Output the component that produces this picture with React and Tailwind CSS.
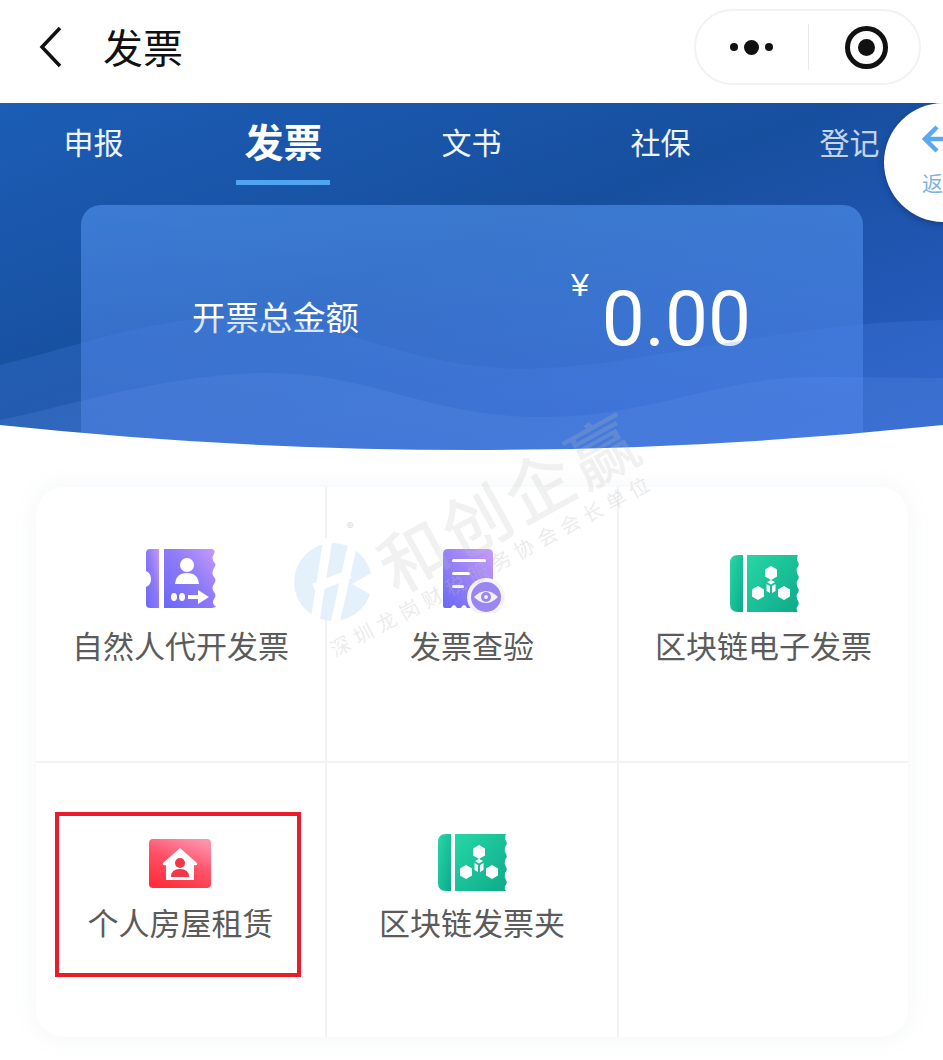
function IconPerson() {
  return (
    <svg width="72" height="66" viewBox="0 0 72 66">
      <defs>
        <linearGradient id="pa" x1="0" y1="1" x2="1" y2="0">
          <stop offset="0" stopColor="#6a68f6" />
          <stop offset="0.55" stopColor="#8f7bf8" />
          <stop offset="1" stopColor="#c79bfb" />
        </linearGradient>
      </defs>
      <path d="M5 2H14V61H5Q1 61 1 57V40Q6 38 6 32Q6 26 1 24V6Q1 2 5 2Z" fill="url(#pa)" />
      <path d="M19 2H67Q71 3 69 7Q66 11 69 15Q72 17 69 21Q66 26 69 30Q72 33 69 37Q66 41 69 45Q72 48 69 52Q66 56 71 60L67 61H19Z" fill="url(#pa)" />
      <circle cx="42" cy="18" r="7" fill="#fff" />
      <path d="M30 37Q31 26 42 26Q53 26 54 37Z" fill="#fff" />
      <ellipse cx="29" cy="50" rx="3" ry="4" fill="#fff" />
      <ellipse cx="37" cy="50" rx="3" ry="4" fill="#fff" />
      <path d="M43 48H53V43L64 50L53 57V52H43Z" fill="#fff" />
    </svg>
  );
}

function IconCheck() {
  return (
    <svg width="72" height="66" viewBox="0 0 72 66">
      <defs>
        <linearGradient id="ca" x1="0" y1="1" x2="1" y2="0">
          <stop offset="0" stopColor="#6a68f6" />
          <stop offset="1" stopColor="#c69bf9" />
        </linearGradient>
      </defs>
      <path d="M12 2H52Q57 2 57 7V50H45V61H41Q38 55 35 61H31Q28 55 25 61H21Q18 55 15 61H9Q7 61 7 59V7Q7 2 12 2Z" fill="url(#ca)" />
      <rect x="16" y="12" width="34" height="3" rx="1.5" fill="#fff" />
      <rect x="16" y="25" width="18" height="3" rx="1.5" fill="#fff" />
      <rect x="16" y="38" width="12" height="3" rx="1.5" fill="#fff" />
      <circle cx="50" cy="50" r="19" fill="#f6f2fc" />
      <circle cx="50" cy="50" r="15" fill="#9a86ef" />
      <path d="M38 50Q50 38 62 50Q50 62 38 50Z" fill="#f4f0fc" />
      <circle cx="50" cy="50" r="5" fill="#9a86ef" />
      <circle cx="50" cy="50" r="2" fill="#f4f0fc" />
    </svg>
  );
}

function IconChain({ id, dy, dx }) {
  return (
    <svg width="72" height="66" viewBox="0 0 72 66">
      <defs>
        <linearGradient id={id} x1="0" y1="0" x2="1" y2="1">
          <stop offset="0" stopColor="#27d7a6" />
          <stop offset="1" stopColor="#0eaa8a" />
        </linearGradient>
      </defs>
      <g transform={`translate(${dx} ${dy})`}>
        <path d="M8 0H13V57H8Q0 57 0 49V8Q0 0 8 0Z" fill={`url(#${id})`} />
        <path d="M17 0H68Q66 4 68 7Q70 10 67 13Q66 17 68 20Q70 23 67 26Q66 30 68 33Q70 36 67 39Q66 43 68 46Q70 49 67 52Q66 55 68 57H17Z" fill={`url(#${id})`} />
        <path d="M41 11L47 14.5V21.5L41 25L35 21.5V14.5Z" fill="#fff" />
        <path d="M28 31L34 34.5V41.5L28 45L22 41.5V34.5Z" fill="#fff" />
        <path d="M54 31L60 34.5V41.5L54 45L48 41.5V34.5Z" fill="#fff" />
        <path d="M37 27L41 25L45 27L41 29.5Z" fill="#fff" />
        <path d="M40 31V38L36.5 36V29Z" fill="#fff" />
        <path d="M42 31V38L45.5 36V29Z" fill="#fff" />
      </g>
    </svg>
  );
}

function IconHouse() {
  return (
    <svg width="72" height="66" viewBox="0 0 72 66">
      <defs>
        <linearGradient id="ha" x1="0.3" y1="1" x2="0.8" y2="0">
          <stop offset="0" stopColor="#ff2f3b" />
          <stop offset="0.5" stopColor="#ff5168" />
          <stop offset="1" stopColor="#ff93ad" />
        </linearGradient>
      </defs>
      <rect x="4" y="9" width="62" height="49" rx="4" fill="url(#ha)" />
      <path d="M35 18L52 33Q53 36 49 35V50H21V35Q17 36 18 33Z" fill="#fff" />
      <circle cx="35" cy="33" r="5" fill="#f0384a" />
      <path d="M26 47Q26 39 35 39Q44 39 44 47Z" fill="#f0384a" />
    </svg>
  );
}

function Cell({ children, label, row, border }) {
  return (
    <div className={`flex flex-col items-center ${row === 1 ? "pt-[60px] border-b-2 border-[#f1f3f5]" : "pt-[67px]"} ${border ? "border-r-2 border-r-[#f1f3f5]" : ""}`}>
      {children}
      {label ? (
        <div className={`${row === 1 ? "mt-[12px]" : "mt-[6px]"} text-[31px] leading-[40px] text-[#5b5b5b] whitespace-nowrap`}>{label}</div>
      ) : null}
    </div>
  );
}

export default function App() {
  return (
    <div
      className="relative w-[943px] h-[1060px] overflow-hidden bg-white"
      style={{ fontFamily: '"Noto Sans CJK SC", "Noto Sans", sans-serif' }}
    >
      <header className="h-[103px] bg-white flex items-center pl-[38px] pr-[22px]">
        <svg width="26" height="42" viewBox="0 0 26 42" className="mb-[9px]">
          <path d="M22 2L4 21L22 40" fill="none" stroke="#111" strokeWidth="3.5" />
        </svg>
        <div className="ml-[39px] mb-[11px] text-[40px] leading-[50px] text-[#111]">发票</div>
        <div className="ml-auto mb-[9px] w-[227px] h-[76px] rounded-full border-2 border-[#f2f2f2] flex items-center">
          <div className="ml-[34px] flex items-center gap-[6px]">
            <span className="w-[8px] h-[8px] rounded-full bg-[#111]" />
            <span className="w-[15px] h-[15px] rounded-full bg-[#111]" />
            <span className="w-[8px] h-[8px] rounded-full bg-[#111]" />
          </div>
          <div className="ml-[35px] w-[1px] h-[46px] bg-[#e8e8e8]" />
          <div className="ml-[36px] w-[43px] h-[43px] rounded-full border-[5px] border-[#111] flex items-center justify-center">
            <span className="w-[17px] h-[17px] rounded-full bg-[#111]" />
          </div>
        </div>
      </header>

      <section className="relative h-[347px] overflow-hidden bg-[linear-gradient(160deg,#1c5db5_0%,#174f9f_45%,#2c5fc8_100%)]">
        <div className="flex h-[80px] -ml-[1px] text-white">
          {["申报", "发票", "文书", "社保", "登记"].map((t, i) => (
            <div key={t} className="w-[189px] shrink-0 flex flex-col items-center">
              {i === 1 ? (
                <>
                  <div className="shrink-0 mt-[12px] ml-[2px] text-[39px] leading-[50px] font-bold">{t}</div>
                  <div className="shrink-0 mt-[15px] w-[94px] h-[5px] bg-[#50a5f2]" />
                </>
              ) : (
                <div className={`mt-[18px] text-[30px] leading-[40px] ${i === 4 ? "text-[#c3d5ee]" : "text-[#eef4fb]"}`}>{t}</div>
              )}
            </div>
          ))}
        </div>

        <div className="mt-[22px] ml-[81px] mr-[80px] h-[260px] rounded-[20px] bg-[linear-gradient(180deg,rgba(84,150,240,0.58),rgba(84,130,240,0.45))] flex items-start text-white">
          <div className="mt-[87px] ml-[111px] text-[33.4px] leading-[48px] whitespace-nowrap">开票总金额</div>
          <div className="ml-auto mr-[112px] flex items-start">
            <span className="mt-[60px] text-[32px] leading-[40px]" style={{ fontFamily: '"Liberation Sans", sans-serif' }}>¥</span>
            <span className="ml-[13px] mt-[62px] text-[76.5px] leading-[104px]" style={{ fontFamily: 'Roboto, sans-serif' }}>0.00</span>
          </div>
        </div>

        <svg className="absolute left-0 top-0 pointer-events-none" width="943" height="347" viewBox="0 0 943 347">
          <path d="M0 262C90 240 150 214 240 214C330 214 400 260 500 265C620 272 760 220 943 217V347H0Z" fill="#4f8ae8" fillOpacity="0.22" />
          <path d="M0 317C80 300 170 270 270 270C370 270 430 314 541 314C650 314 720 274 812 274C860 274 900 275 943 275V347H0Z" fill="#6a9aec" fillOpacity="0.18" />
          <path d="M0 322Q471.5 372 943 322V347H0Z" fill="#fff" />
        </svg>

        <div className="absolute left-[884px] top-0 w-[118px] h-[119px] rounded-l-[60px] bg-white flex flex-col pl-[38px] shadow-[0_2px_6px_rgba(10,40,90,0.5)]">
          <svg width="26" height="30" viewBox="0 0 26 30" className="mt-[21px]">
            <path d="M15 3L3 15L15 27M3 15H26" fill="none" stroke="#5aa8ee" strokeWidth="4.5" />
          </svg>
          <div className="mt-[14px] text-[21px] leading-[28px] text-[#7fb4dd] whitespace-nowrap">返</div>
        </div>
      </section>

      <section className="mt-[37px] ml-[36px] mr-[35px] h-[550px] rounded-[28px] bg-white shadow-[0_0_24px_rgba(120,140,170,0.09)] grid grid-cols-[291px_292px_289px] grid-rows-[276px_274px] overflow-hidden">
        <Cell row={1} border label="自然人代开发票"><IconPerson /></Cell>
        <Cell row={1} border label="发票查验"><IconCheck /></Cell>
        <Cell row={1} label="区块链电子发票"><IconChain id="g1" dx={2} dy={8} /></Cell>
        <Cell row={2} border label="个人房屋租赁"><IconHouse /></Cell>
        <Cell row={2} border label="区块链发票夹"><IconChain id="g2" dx={2} dy={4} /></Cell>
        <Cell row={2} label=""><div /></Cell>
      </section>

      <div className="absolute left-[55px] top-[812px] w-[246px] h-[165px] border-[4px] border-[#ea1c2a] pointer-events-none" />

      <svg className="absolute left-[290px] top-[538px] pointer-events-none" width="90" height="90" viewBox="0 0 90 90">
        <circle cx="43" cy="44" r="39" fill="#e2eff9" fillOpacity="0.9" />
        <path d="M38 0L24 90M64 0L44 90M24 50L60 36" stroke="#fff" strokeWidth="9" fill="none" />
        <path d="M90 30L62 46L90 62Z" fill="#fff" />
      </svg>
      <div className="absolute left-[350px] top-[527px] -translate-x-1/2 -translate-y-1/2 text-[14px] leading-none text-[#d9d9d9]">®</div>
      <div className="absolute left-[508px] top-[500px] -translate-x-1/2 -translate-y-1/2 rotate-[-29deg] text-[68px] leading-none tracking-[4px] font-medium whitespace-nowrap text-[rgba(190,190,190,0.22)] pointer-events-none">和创企赢</div>
      <div className="absolute left-[492px] top-[565px] -translate-x-1/2 -translate-y-1/2 rotate-[-28deg] text-[20px] leading-none tracking-[6px] whitespace-nowrap text-[rgba(190,190,190,0.3)] pointer-events-none">深圳龙岗财税服务协会会长单位</div>
    </div>
  );
}
